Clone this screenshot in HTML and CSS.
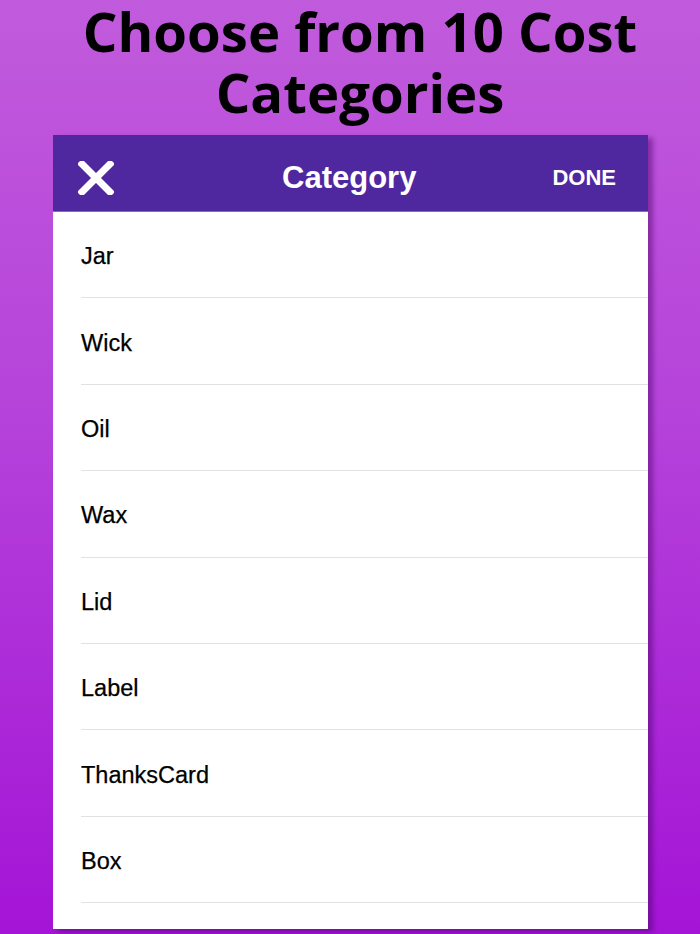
FILE: index.html
```html
<!DOCTYPE html>
<html>
<head>
<meta charset="utf-8">
<link rel="stylesheet" href="styles.css">
</head>
<body>
<div class="page">
  <h1 class="title">Choose from 10 Cost<br>Categories</h1>
  <div class="card">
    <div class="bar">
      <svg class="close" viewBox="0 0 36 34" width="36" height="34">
        <path d="M4 3 L32 31 M32 3 L4 31" stroke="#fff" stroke-width="7" stroke-linecap="square" fill="none"/>
      </svg>
      <div class="bar-title">Category</div>
      <div class="done">DONE</div>
    </div>
    <ul class="list">
      <li class="row">Jar</li>
      <li class="row">Wick</li>
      <li class="row">Oil</li>
      <li class="row">Wax</li>
      <li class="row">Lid</li>
      <li class="row">Label</li>
      <li class="row">ThanksCard</li>
      <li class="row">Box</li>
      <li class="row"></li>
    </ul>
  </div>
</div>
</body>
</html>
```
FILE: styles.css
```css
html, body {
  margin: 0;
  padding: 0;
}
body {
  width: 700px;
  height: 934px;
  overflow: hidden;
  background: linear-gradient(to bottom, #c15bdc 0%, #b542da 45%, #a414d6 100%);
}
.page {
  display: flex;
  flex-direction: column;
  align-items: center;
}
.title {
  margin: 0;
  width: 700px;
  height: 135px;
  box-sizing: border-box;
  padding: 1px 0 0 20px;
  font-family: "Open Sans", sans-serif;
  font-weight: 700;
  font-size: 54.5px;
  line-height: 61px;
  text-align: center;
  color: #000;
}
.card {
  width: 595px;
  height: 794px;
  background: #fff;
  overflow: hidden;
  box-shadow: 5px 3px 5px rgba(70, 0, 100, 0.45);
  margin-left: 1px;
}
.bar {
  height: 77px;
  box-sizing: border-box;
  padding: 10px 32px 0 25px;
  background: #4f28a0;
  border-bottom: 1px solid #8a62c8;
  display: flex;
  align-items: center;
  justify-content: space-between;
  font-family: "Liberation Sans", Arial, sans-serif;
  color: #fff;
}
.close {
  display: block;
}
.bar-title {
  font-size: 31px;
  font-weight: 700;
  margin-left: 32px;
}
.done {
  font-size: 22px;
  font-weight: 700;
}
.list {
  list-style: none;
  margin: 0;
  padding: 0 0 0 28px;
}
.row {
  height: 81.4px;
  padding-top: 4px;
  border-bottom: 1px solid #e2e2e2;
  display: flex;
  align-items: center;
  font-family: "Liberation Sans", Arial, sans-serif;
  font-size: 23.5px;
  color: #000;
  -webkit-text-stroke: 0.25px #000;
}
```
